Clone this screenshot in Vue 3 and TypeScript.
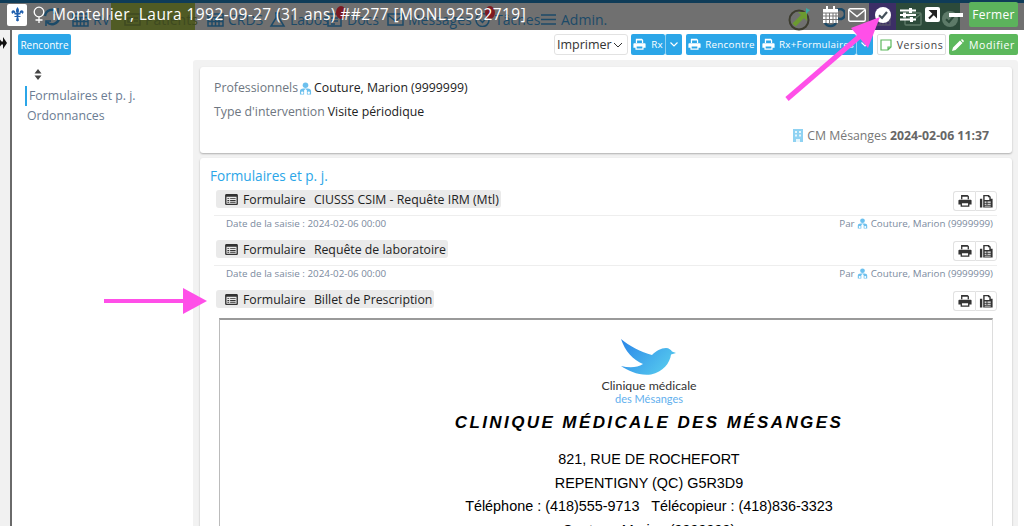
<template>
  <div class="page">
    <svg class="defs" width="0" height="0">
      <defs>
        <symbol id="printer" viewBox="0 0 16 16">
          <path fill="currentColor" fill-rule="evenodd" d="M3.500 1h7.500L12.500 2.500V6H11V3H5v3H3.500zM1.500 6.500h13c.6 0 1 .4 1 1V12H13v2.500H3V12H.5V7.500c0-.6.4-1 1-1zM4.500 10.500V13h7v-2.500z"/>
        </symbol>
        <symbol id="fax" viewBox="0 0 16 16">
          <path fill="currentColor" fill-rule="evenodd" d="M1 5h2.500v9.500H1zM4.500 5V1h6l2 2v2h2v9.500h-10zM6 2.500V6.500h5V3.500H9.500v-1zM6 8h2v1.200H6zm3 0h3.500v1.200H9zm-3 2.300h2v1.200H6zm3 0h3.500v1.200H9zm-3 2.200h6.500v.8H6z"/>
        </symbol>
        <symbol id="person" viewBox="0 0 14 14">
          <circle cx="7" cy="3.500" r="3" fill="#6cc0ee"/>
          <path fill="#6cc0ee" d="M1 13.500V10c0-2 1.500-3 3.500-3h5c2 0 3.500 1 3.500 3v3.500H8.500V9L7 7.500 5.500 9v4.500z"/>
          <circle cx="3.500" cy="11.500" r="1.300" fill="#fff"/>
          <circle cx="10.500" cy="11.500" r="1.300" fill="#fff"/>
        </symbol>
        <symbol id="doc-list" viewBox="0 0 14 12">
          <path fill="#333" fill-rule="evenodd" d="M1.500 0h11c.8 0 1.500.7 1.500 1.500v9c0 .8-.7 1.500-1.500 1.500h-11C.7 12 0 11.300 0 10.500v-9C0 .7.700 0 1.500 0zM1.500 3v7.500h11V3zM2.500 4.500h2v1h-2zm3 0h6v1h-6zm-3 2h2v1h-2zm3 0h6v1h-6zm-3 2h2v1h-2zm3 0h6v1h-6z"/>
        </symbol>
      </defs>
    </svg>

    <nav class="nav">
      <div class="nav-strip"></div>
      <div class="nav-row">
        <span class="nav-refresh">
          <svg width="18" height="18" viewBox="0 0 18 18" fill="none" stroke="#1c4a68" stroke-width="2.400"><path d="M2 8a7 7 0 0 1 12-4M16 10a7 7 0 0 1-12 4"/><path d="M15 0v5h-5M3 18v-5h5" stroke-width="1.600"/></svg>
        </span>
        <span v-for="n in navItems" :key="n.label" class="nav-item" :class="{ active: n.active }" :style="{ width: n.width + 'px', paddingLeft: n.pad + 'px' }">
          <svg class="nav-ico" width="17" height="15" viewBox="0 0 17 15" fill="none" stroke="currentColor" stroke-width="1.500"><path :d="n.icon"/></svg>
          {{ n.label }}
          <i v-if="n.badge" class="nav-badge"></i>
        </span>
        <span class="nav-fill"></span>
        <svg class="ghost" style="margin-right: 24px" width="22" height="20" viewBox="0 0 22 20" fill="none" stroke="#1c4a68" stroke-width="2.500"><path d="M2 15c2 4 9 4 11 0M12 6a5 5 0 1 1 0 .1z"/></svg>
        <span class="nav-tint purple">
          <svg width="16" height="14" viewBox="0 0 16 14" fill="none" stroke="#55506a" stroke-width="1.300"><path d="M1 2h14v11H1zM1 6h14M1 9.500h14M5 2v11M8 2v11M11 2v11"/></svg>
        </span>
        <span class="nav-tint green">
          <svg width="18" height="14" viewBox="0 0 18 14" fill="none" stroke="#5d7a68" stroke-width="1.400"><rect x="1" y="1" width="16" height="12" rx="1"/><path d="M1 2l8 6 8-6"/></svg>
          <svg style="margin-left: 20px" width="16" height="16" viewBox="0 0 16 16"><circle cx="8" cy="8" r="8" fill="#5d7a68"/><path d="M4 8.200 7 11l5-6" fill="none" stroke="#2c4a3a" stroke-width="2"/></svg>
        </span>
      </div>
    </nav>

    <div class="title-bar">
      <span class="fleur">
        <svg width="13" height="15" viewBox="0 0 13 15"><path fill="#1f5fae" d="M6.500 0C8 2 8.500 3.500 7.500 6h1c0-2 1.500-3 3-2.500 1.500.6 1.500 3-.5 3.500.2-1-.5-1.500-1-1.200-.5.300-.5 1.200-.5 1.700h-2V9h2v1H7.200l.8 3.500-1.500 1-1.500-1 .8-3.500H3.500V9h2V7.500h-2c0-.5 0-1.400-.5-1.700-.5-.3-1.200.2-1 1.200C0 6.500 0 4.100 1.500 3.500c1.500-.5 3 .5 3 2.500h1c-1-2.500-.5-4 1-6z"/></svg>
      </span>
      <svg class="gender" width="12" height="17" viewBox="0 0 12 17" fill="none" stroke="#fff" stroke-width="1.300"><circle cx="6" cy="6" r="4.800"/><path d="M6 11v6M2.500 14h7"/></svg>
      <span class="title-text">Montellier, Laura 1992-09-27 (31 ans) ##277 [MONL92592719]</span>
      <span class="title-spacer"></span>
      <svg class="t-icon goto" width="24" height="24" viewBox="0 0 24 24"><circle cx="11" cy="13" r="9.500" fill="none" stroke="#3d3d30" stroke-width="2"/><path d="M6 18 15 9" stroke="#6b9a30" stroke-width="4.500"/><path d="M10 5h9v9z" fill="#6b9a30"/><path d="M18 1l4 2-4 4z" fill="#3ba8a0"/></svg>
      <svg class="t-icon" style="margin-left: 10px" width="17" height="18" viewBox="0 0 17 18"><path fill="#fff" d="M1 3h15v14H1z"/><path stroke="#777" d="M1 7h15M4 7v10M7.500 7v10M11 7v10M14 7v10M1 10h15M1 13.500h15"/><path stroke="#fff" stroke-width="2" d="M5 0v4M12 0v4"/></svg>
      <svg class="t-icon" style="margin-left: 9px" width="18" height="14" viewBox="0 0 18 14" fill="none" stroke="#fff" stroke-width="1.400"><rect x=".7" y=".7" width="16.600" height="12.600" rx="1.500"/><path d="M1 2l8 6.500L17 2"/></svg>
      <svg class="t-icon" style="margin-left: 9px" width="16" height="16" viewBox="0 0 16 16"><circle cx="8" cy="8" r="8" fill="#fff"/><path d="M4 8.200 7 11l5-6" fill="none" stroke="#44505a" stroke-width="2.200"/></svg>
      <svg class="t-icon" style="margin-left: 9px" width="16" height="14" viewBox="0 0 16 14" fill="#fff"><path d="M0 1.500h16v2H0zM0 6h16v2H0zM0 10.500h16v2H0z"/><path d="M9 0h3v5H9zM3 4.500h3v5H3zM10 9h3v5h-3z"/></svg>
      <svg class="t-icon" style="margin-left: 9px" width="15" height="15" viewBox="0 0 15 15"><rect width="15" height="15" rx="2" fill="#fff"/><path d="M4 11.500l6-6M6 4h5v5z" stroke="#222" stroke-width="2" fill="#222"/></svg>
      <span class="t-minus"></span>
      <button class="close-btn">Fermer</button>
    </div>

    <div class="main">
      <aside class="rail">
        <svg width="7" height="12" viewBox="0 0 7 12"><path d="M0 2.500 1.500 4.500V7.500L0 9.500zM1.500 4.500H3V0l4 6-4 6V7.500H1.500z" fill="#111"/></svg>
      </aside>

      <div class="workspace">
        <div class="toolbar">
          <button class="btn blue small">Rencontre</button>
          <span class="toolbar-fill"></span>
          <span class="select">Imprimer
            <svg width="10" height="6" viewBox="0 0 10 6" fill="none" stroke="#333"><path d="M1 1l4 4 4-4"/></svg>
          </span>
          <span class="split">
            <button class="btn blue w-rx"><svg class="pi" width="13" height="13"><use href="#printer"/></svg>Rx</button>
            <button class="btn blue caret"><svg width="8" height="5" viewBox="0 0 8 5" fill="none" stroke="#fff" stroke-width="1.200"><path d="M.5.500 4 4 7.500.5"/></svg></button>
          </span>
          <button class="btn blue w-ren"><svg class="pi" width="13" height="13"><use href="#printer"/></svg>Rencontre</button>
          <span class="split">
            <button class="btn blue w-rxf"><svg class="pi" width="13" height="13"><use href="#printer"/></svg>Rx+Formulaires</button>
            <button class="btn blue caret"><svg width="8" height="5" viewBox="0 0 8 5" fill="none" stroke="#fff" stroke-width="1.200"><path d="M.5.500 4 4 7.500.5"/></svg></button>
          </span>
          <button class="btn outline">
            <svg width="12" height="12" viewBox="0 0 12 12" fill="none" stroke="#5cb85c" stroke-width="1.200"><path d="M1 1h10v7l-3 3H1zM11 8H8v3"/></svg>Versions
          </button>
          <button class="btn green">
            <svg width="12" height="12" viewBox="0 0 12 12" fill="#fff"><path d="M0 12l1-3.500L8 1.500 10.500 4l-7 7zM9 1l1-1 2 2-1 1.500z"/></svg>Modifier
          </button>
        </div>

        <div class="columns">
          <div class="side">
            <svg class="sort" width="8" height="11" viewBox="0 0 8 11" fill="#444"><path d="M4 0l3.500 4.500h-7zM4 11 .5 6.500h7z"/></svg>
            <a class="side-link current">Formulaires et p. j.</a>
            <a class="side-link">Ordonnances</a>
          </div>

          <div class="content">
            <section class="card info">
              <div class="info-line"><span class="lbl">Professionnels</span><svg class="person" width="13" height="13"><use href="#person"/></svg><span>Couture, Marion (9999999)</span></div>
              <div class="info-line"><span class="lbl">Type d'intervention</span><span>Visite périodique</span></div>
              <div class="place">
                <svg width="10" height="13" viewBox="0 0 10 13"><rect width="10" height="13" fill="#8fd2f2"/><path d="M2 2h2v2H2zm4 0h2v2H6zM2 5.500h2v2H2zm4 0h2v2H6z" fill="#e6f6fd"/><rect x="3" y="10" width="4" height="3" fill="#e6f6fd"/></svg>
                CM Mésanges <b>2024-02-06 11:37</b>
              </div>
            </section>

            <section class="card forms">
              <h3 class="forms-title">Formulaires et p. j.</h3>
              <div v-for="(f, i) in forms" :key="f" class="form-item" :class="{ open: i === 2 }">
                <div class="form-head">
                  <span class="pill"><svg width="13" height="11"><use href="#doc-list"/></svg>Formulaire <span class="pill-name">{{ f }}</span></span>
                  <span class="icon-group">
                    <button><svg width="14" height="14"><use href="#printer"/></svg></button>
                    <button><svg width="15" height="15"><use href="#fax"/></svg></button>
                  </span>
                </div>
                <div v-if="i < 2" class="form-meta">
                  <span>Date de la saisie : 2024-02-06 00:00</span>
                  <span class="by">Par <svg class="person-s" width="11" height="11"><use href="#person"/></svg> Couture, Marion (9999999)</span>
                </div>
              </div>

              <div class="sheet">
                <svg class="bird" width="56" height="37" viewBox="0 0 56 37">
                  <defs>
                    <linearGradient id="bird" x1="0" y1="0" x2="1" y2=".6"><stop offset="0" stop-color="#2a85e8"/><stop offset="1" stop-color="#55c8ee"/></linearGradient>
                  </defs>
                  <path fill="url(#bird)" d="M0 0C8 7 20 13 31 16 35 12 40 9 45 9 48 9 50 11 51 12.500L55 14 50 15.500C49 24 42 33 30 35.500 18 37 8 32 0 27 8 29 16 29 22 25 12 21 4 12 0 0z"/>
                </svg>
                <div class="logo-name">Clinique médicale</div>
                <div class="logo-sub">des Mésanges</div>
                <h1 class="sheet-title">CLINIQUE MÉDICALE DES MÉSANGES</h1>
                <p class="addr first">821, RUE DE ROCHEFORT</p>
                <p class="addr">REPENTIGNY (QC) G5R3D9</p>
                <p class="addr">Téléphone : (418)555-9713 &nbsp; Télécopieur : (418)836-3323</p>
                <p class="addr">Couture, Marion (9999999)</p>
              </div>
            </section>
          </div>
        </div>
      </div>
    </div>

    <!-- annotation arrows drawn over the screenshot -->
    <svg class="arrows" width="1024" height="526" viewBox="0 0 1024 526">
      <path d="M787 99 867 30" stroke="#ff4fe8" stroke-width="5" fill="none"/>
      <path d="M880 17 851 28 868 48z" fill="#ff4fe8"/>
      <path d="M104 301H186" stroke="#ff4fe8" stroke-width="4" fill="none"/>
      <path d="M207 301 183 288V314z" fill="#ff4fe8"/>
    </svg>
  </div>
</template>

<script setup lang="ts">
const calendar = 'M1 2h15v12H1zM1 5.500h15M1 9.500h15M5 5.500V14M8.500 5.500V14M12 5.500V14'
const card = 'M1 2h15v11H1zM4 6h4v4H4zM10 6h4M10 9h4'
const flask = 'M6 1h5M7 1v5L2 14h13L10 6V1'
const doc = 'M2 2h13v12H2zM5 6h7M5 9h7M5 12h4'
const mail = 'M1 2h15v11H1zM1 3l7.500 6L16 3'
const check = 'M15 7.500A6.500 6.500 0 1 1 11 2M5 7l3.500 3.500L15 3'
const bars = 'M1 3h15M1 7.500h15M1 12h15'

const navItems = [
  { label: 'RV', width: 41, pad: 2, icon: calendar },
  { label: 'Patients', width: 84, pad: 13, icon: card, active: true },
  { label: 'CRDS', width: 70, pad: 12, icon: calendar },
  { label: 'Labos', width: 58, pad: 4, icon: flask },
  { label: 'Docs', width: 60, pad: 3, icon: doc, badge: true },
  { label: 'Messages', width: 89, pad: 4, icon: mail },
  { label: 'Tâches', width: 68, pad: 2, icon: check, badge: true },
  { label: 'Admin.', width: 70, pad: 0, icon: bars },
]

const forms: string[] = [
  'CIUSSS CSIM - Requête IRM (Mtl)',
  'Requête de laboratoire',
  'Billet de Prescription',
]
</script>

<style>
html, body { margin: 0; overflow: hidden; background: #fff; }
</style>

<style scoped>
.page {
  position: relative; width: 1024px; height: 526px; overflow: hidden;
  display: flex; flex-direction: column;
  font-family: "Open Sans", "Noto Sans", sans-serif; color: #222; background: #fff;
}
.defs { position: absolute; }

.nav { height: 30px; flex-shrink: 0; background: #707070; display: flex; flex-direction: column; }
.nav-strip { height: 5px; background: #0f3c58; }
.nav-row { flex: 1; display: flex; align-items: stretch; color: #1c4a68; font-size: 14px; }
.nav-refresh { width: 70px; padding: 5px 0 0 43px; box-sizing: border-box; }
.nav-item { position: relative; display: flex; align-items: center; gap: 4px; padding-top: 6px; box-sizing: border-box; white-space: nowrap; }
.nav-ico { flex-shrink: 0; }
.nav-item.active { background: #505b24; color: #3e4a20; }
.nav-badge { position: absolute; left: 13px; top: 3px; width: 10px; height: 13px; border-radius: 50%; background: #7c1a22; }
.nav-fill { flex: 1; }
.ghost { margin-top: 5px; }
.nav-tint { display: flex; align-items: center; padding-top: 4px; box-sizing: border-box; }
.nav-tint.purple { width: 27px; background: #3c2e66; justify-content: center; }
.nav-tint.green { width: 64px; background: #2c4a3a; margin-right: 64px; padding-left: 8px; }

.title-bar {
  position: absolute; left: 7px; right: 6px; top: 1px; height: 27px;
  display: flex; align-items: center; color: #fff;
}
.fleur { width: 20px; height: 22px; border-radius: 2px; background: #fff; display: flex; align-items: center; justify-content: center; }
.gender { margin-left: 6px; margin-top: -1px; flex-shrink: 0; }
.title-text { margin-left: 7px; margin-top: -1px; font-size: 15.500px; letter-spacing: .42px; white-space: nowrap; }
.title-spacer { flex: 1; }
.t-icon { flex-shrink: 0; }
.goto { margin-top: 8px; }
.t-minus { width: 14px; height: 4px; background: #fff; margin-left: 9px; margin-right: 6px; }
.close-btn {
  width: 49px; height: 25px; border: none; border-radius: 2px; background: #5cb35c; color: #fff;
  font: 12px "Open Sans", sans-serif; letter-spacing: .3px; padding: 0;
}

.main { flex: 1; display: flex; min-height: 0; }
.rail {
  width: 10px; flex-shrink: 0; background: #f1f1f1; border-right: 2px solid #6a6a6a;
  padding-top: 7px; box-sizing: content-box; display: flex; align-items: flex-start;
}
.workspace { flex: 1; min-width: 0; display: flex; flex-direction: column; }

.toolbar { height: 30px; padding: 4px 6px 0 6px; display: flex; align-items: flex-start; gap: 3px; flex-shrink: 0; box-sizing: border-box; }
.toolbar-fill { flex: 1; }
.btn {
  height: 21px; border: none; border-radius: 2px; padding: 0; color: #fff; font: 9.800px "Open Sans", sans-serif;
  display: inline-flex; align-items: center; justify-content: center; gap: 5px; letter-spacing: .25px; white-space: nowrap; flex-shrink: 0;
}
.btn.blue { background: #2ba6e8; }
.btn.small { width: 53px; font-size: 10px; letter-spacing: 0; }
.btn.w-rx { width: 34px; }
.btn.w-ren { width: 71px; margin-left: 1px; gap: 4px; }
.btn.w-rxf { width: 96px; gap: 4px; }
.btn.green { background: #5cb85c; width: 69px; font-size: 10.500px; letter-spacing: .6px; }
.btn.outline { background: #fff; border: 1px solid #ddd; color: #444; width: 69px; font-size: 10.500px; letter-spacing: .6px; box-sizing: border-box; margin-left: 1px; }
.pi { color: #fff; }
.select {
  width: 74px; height: 21px; box-sizing: border-box; border: 1px solid #e2e2e2; border-radius: 3px;
  display: flex; align-items: center; justify-content: space-between; padding: 0 4px 0 2px; font-size: 12.500px; color: #333;
}
.split { display: inline-flex; gap: 0; }
.btn.caret { width: 17px; border-left: 1px solid #8fd0f2; box-sizing: border-box; }

.columns { flex: 1; min-height: 0; display: flex; }
.side { width: 181px; flex-shrink: 0; padding-top: 9px; box-sizing: border-box; }
.sort { display: block; margin: 0 0 6px 22px; }
.side-link { display: block; font-size: 12.300px; color: #6b7c93; height: 20px; line-height: 20px; margin: 0 0 0 15px; }
.side-link.current { border-left: 2px solid #2ba6e8; padding-left: 2px; margin-left: 13px; }

.content { width: 825px; flex-shrink: 0; background: #f2f2f2; padding: 7px 6px 0 7px; box-sizing: border-box; border-radius: 3px 3px 0 0; }
.card { background: #fff; border-radius: 3px; box-shadow: 0 1px 2px rgba(0,0,0,.28); }
.info { height: 86px; padding: 11px 15px 0 14px; box-sizing: border-box; margin-bottom: 5px; font-size: 12.300px; }
.info-line { height: 24px; line-height: 20px; color: #222; display: flex; gap: 3px; align-items: baseline; white-space: pre; }
.lbl { color: #6e7681; }
.person { align-self: center; margin-left: -2px; margin-right: -1px; margin-top: -3px; }
.place { text-align: right; color: #777; margin: 1px 8px 0 0; font-size: 12.300px; }
.place svg { vertical-align: -2px; margin-right: 1px; }
.place b { color: #666; font-weight: 700; }

.forms { padding: 8px 15px 0 14px; height: 400px; overflow: hidden; box-sizing: border-box; }
.forms-title { margin: 0 0 5px -4px; color: #2ba6e8; font-size: 13.600px; font-weight: 400; line-height: 19px; }
.form-item { height: 50px; }
.form-item.open { height: 28px; }
.form-head { display: flex; justify-content: space-between; align-items: flex-start; padding-left: 2px; height: 25px; border-bottom: 1px solid #eee; }
.form-item.open .form-head { border-bottom: none; }
.pill {
  height: 18px; display: inline-flex; align-items: center; gap: 5px; padding: 0 2px 0 9px; border-radius: 3px;
  background: #eaeaea; font-size: 12.300px; color: #222; white-space: pre;
}
.icon-group { display: inline-flex; height: 20px; margin-top: 1px; }
.icon-group button {
  width: 22px; height: 20px; padding: 0; background: #fff; color: #333; border: 1px solid #e2e2e2; display: flex; align-items: center; justify-content: center;
}
.icon-group button:first-child { border-radius: 3px 0 0 3px; border-right: none; }
.icon-group button:last-child { border-radius: 0 3px 3px 0; }
.form-meta { display: flex; justify-content: space-between; padding: 1px 4px 0 12px; font-size: 9.800px; color: #7b8a9e; line-height: 14px; }
.by { white-space: pre; }
.person-s { vertical-align: -2px; }

.sheet {
  margin: 0 4px 0 5px; border-top: 2px solid #9a9a9a; border-left: 1px solid #bbb; border-right: 1px solid #ddd;
  height: 300px; text-align: center; font-family: "Liberation Sans", Arial, sans-serif; color: #000;
  padding: 19px 0 0 86px; box-sizing: border-box;
}
.bird { display: block; margin: 0 auto; }
.logo-name { margin-top: 3px; font: 12.300px/14px "Lato", "Open Sans", sans-serif; color: #333; }
.logo-sub { font: 11px/12px "Lato", "Open Sans", sans-serif; color: #62b0ee; }
.sheet-title { margin: 7px 0 0; font-size: 17px; line-height: 22px; font-style: italic; font-weight: 700; letter-spacing: 2.400px; }
.addr { margin: 0; font-size: 14.400px; line-height: 23.500px; }
.addr.first { margin-top: 14px; }

.arrows { position: absolute; left: 0; top: 0; pointer-events: none; }
</style>
